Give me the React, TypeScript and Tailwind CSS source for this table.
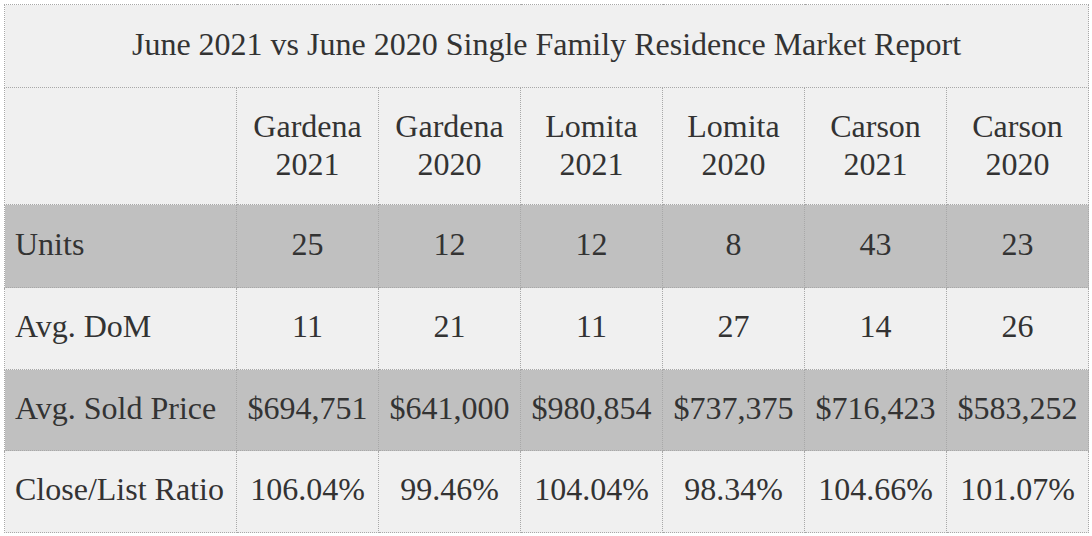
const cols = [
  ["Gardena", "2021"],
  ["Gardena", "2020"],
  ["Lomita", "2021"],
  ["Lomita", "2020"],
  ["Carson", "2021"],
  ["Carson", "2020"],
];

const rows = [
  { label: "Units", values: ["25", "12", "12", "8", "43", "23"], dark: true, h: "h-[83px]" },
  { label: "Avg. DoM", values: ["11", "21", "11", "27", "14", "26"], dark: false, h: "h-[82px]" },
  {
    label: "Avg. Sold Price",
    values: ["$694,751", "$641,000", "$980,854", "$737,375", "$716,423", "$583,252"],
    dark: true,
    h: "h-[81px]",
  },
  {
    label: "Close/List Ratio",
    values: ["106.04%", "99.46%", "104.04%", "98.34%", "104.66%", "101.07%"],
    dark: false,
    h: "h-[82px]",
  },
];

export default function App() {
  return (
    <div className="h-[536px] w-[1092px] bg-white p-1 font-[family-name:Liberation_Serif,serif] text-[32px] leading-[38px] text-[#333]">
      <table className="w-[1084px] table-fixed border-collapse border border-dotted border-[#a8a8a8]">
        <colgroup>
          <col className="w-[232px]" />
          {cols.map((_, i) => (
            <col key={i} className="w-[142px]" />
          ))}
        </colgroup>
        <tbody>
          <tr className="h-[83px] bg-[#f0f0f0]">
            <td colSpan={7} className="border border-dotted border-[#a8a8a8] pb-[5px] text-center">
              June 2021 vs June 2020 Single Family Residence Market Report
            </td>
          </tr>
          <tr className="h-[117px] bg-[#f0f0f0]">
            <td className="border border-dotted border-[#a8a8a8]" />
            {cols.map(([city, year]) => (
              <td key={city + year} className="border border-dotted border-[#a8a8a8] pb-[3px] text-center">
                {city}
                <br />
                {year}
              </td>
            ))}
          </tr>
          {rows.map((r) => (
            <tr key={r.label} className={`${r.h} ${r.dark ? "bg-[#c0c0c0]" : "bg-[#f0f0f0]"}`}>
              <td className="whitespace-nowrap border border-dotted border-[#a8a8a8] pb-[5px] pl-[10px]">{r.label}</td>
              {r.values.map((v, i) => (
                <td key={i} className="whitespace-nowrap border border-dotted border-[#a8a8a8] pb-[5px] text-center">
                  {v}
                </td>
              ))}
            </tr>
          ))}
        </tbody>
      </table>
    </div>
  );
}
